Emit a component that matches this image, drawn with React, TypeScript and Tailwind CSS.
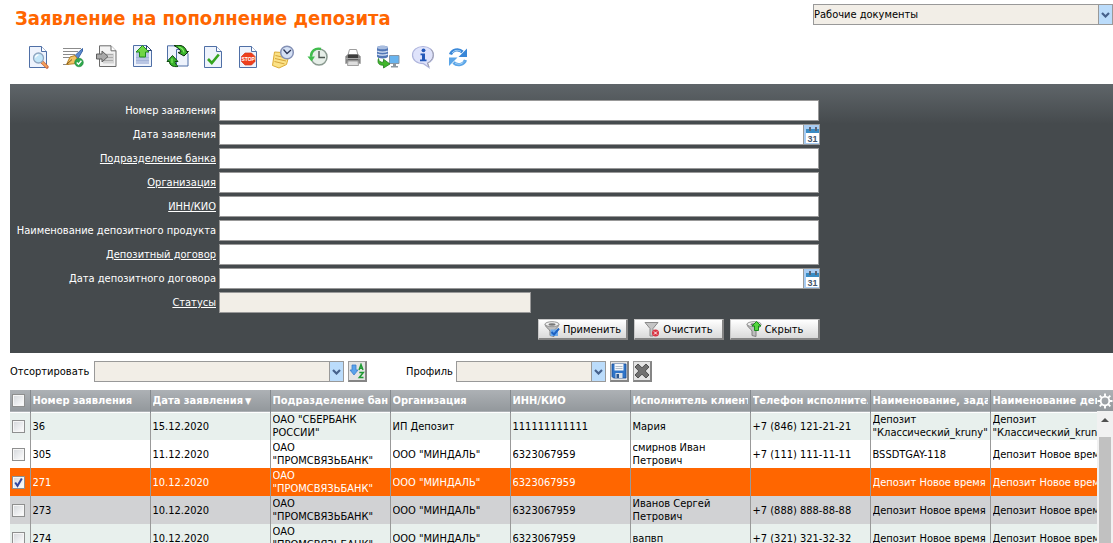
import React, { useId, useState } from "react";

type IconProps = { children: React.ReactNode };

function Icon24({ children }: IconProps) {
  return (
    <svg viewBox="0 0 24 24" className="size-6 shrink-0" fill="none" aria-hidden="true">
      {children}
    </svg>
  );
}

function Page({ stroke = "#4f6fa6", fill = "#eef3fc" }: { stroke?: string; fill?: string }) {
  return (
    <>
      <path d="M3.500 1.500h12l5 5v16h-17z" fill={fill} stroke={stroke} />
      <path d="M15.500 1.500v5h5" fill="#ffffff" stroke={stroke} />
    </>
  );
}

const tools: { label: string; icon: React.ReactNode }[] = [
  {
    label: "Просмотр",
    icon: (
      <Icon24>
        <Page />
        <path d="M16 17l5 5" stroke="#c9603a" strokeWidth="3.200" strokeLinecap="round" />
        <path d="M16 17l4.600 4.600" stroke="#f3a35c" strokeWidth="2" strokeLinecap="round" />
        <circle cx="12.500" cy="13" r="5" fill="#c3e6f8" stroke="#8fa6c0" strokeWidth="1.300" />
        <path d="M9.500 12.500a3.200 3.200 0 0 1 3-2.700" stroke="#ffffff" strokeWidth="1.300" />
      </Icon24>
    ),
  },
  {
    label: "Подписать",
    icon: (
      <Icon24>
        <path d="M2 3.500h18M2 6.500h15M2 9.500h12M2 12.500h7M2 19.500h6" stroke="#8b8b8b" />
        <path d="M21.500 3.500l-7.500 7 3 3 4.500-7.500z" fill="#5b8ad0" stroke="#3c66a8" />
        <path d="M14 10.500l-5 1.500-3.500 7.500 8-.8 3-4.700z" fill="#f3c262" stroke="#b58328" />
        <path d="M6 19l5-4.500" stroke="#7d5620" />
        <circle cx="18" cy="17.500" r="4.300" fill="#2fa84c" stroke="#1d8138" strokeWidth=".6" />
        <path d="M15.800 17.500l1.700 1.800 2.900-3.500" stroke="#ffffff" strokeWidth="1.400" />
      </Icon24>
    ),
  },
  {
    label: "Импорт",
    icon: (
      <Icon24>
        <path d="M3.500 .8h11.500l5 5v15.700h-16.500z" fill="#f3f3f3" stroke="#6b6b6b" />
        <path d="M15 .8v5h5" fill="#ffffff" stroke="#6b6b6b" />
        <path d="M7 8.500h11v10h-11z" fill="#d4d4d4" />
        <path d="M7 9.500h10M7 12.500h10M7 15.500h10" stroke="#ababab" />
        <path d="M.5 9h5.500v-3l6 5.500-6 5.500v-3h-5.500z" fill="#a9a9a9" stroke="#5f5f5f" />
      </Icon24>
    ),
  },
  {
    label: "Отправить",
    icon: (
      <Icon24>
        <path d="M2.500 .5h13l5 5v16h-18z" fill="#eef3fc" stroke="#4f6fa6" />
        <path d="M15.500 .5v5h5z" fill="#ffffff" stroke="#2b4475" />
        <path d="M5 6h13v13h-13z" fill="#b9c6e4" />
        <path d="M5 12.500h13M5 15.500h13" stroke="#a4b4d8" />
        <path d="M11.500 .5l6.500 6.500h-3.500v5h-6v-5h-3.500z" fill="#6fd644" stroke="#1f8a1c" />
      </Icon24>
    ),
  },
  {
    label: "Отправить и получить",
    icon: (
      <Icon24>
        <path d="M1.500 .8h8l4 3.700v12h-12z" fill="#eef3fc" stroke="#4f6fa6" />
        <path d="M10.500 4.500h7l4.500 4v12.500h-11.500z" fill="#eef3fc" stroke="#4f6fa6" />
        <path d="M8 .5c7-1.500 12 1.500 12.500 6h2l-4.500 4.500-6-3.500 3-.6c-.8-2.600-3-4-7-6.400z" fill="#38b42b" stroke="#0a2c0a" />
        <path d="M12.500 2c3 .7 5 2.500 5.500 5.500" stroke="#8cea6b" strokeWidth="1.200" />
        <path d="M6.500 10.500l5.500 6h-3c.2 2 1.200 3.500 3 5-5 .6-8.500-1-8.500-5h-2.500z" fill="#38b42b" stroke="#0d4b0d" />
        <path d="M6 13.500v4.500" stroke="#8cea6b" strokeWidth="1.200" />
      </Icon24>
    ),
  },
  {
    label: "Проверить",
    icon: (
      <Icon24>
        <Page />
        <path d="M7 14l3.800 4 7-8.500" stroke="#35a51f" strokeWidth="2.600" />
      </Icon24>
    ),
  },
  {
    label: "Отозвать",
    icon: (
      <Icon24>
        <Page />
        <path d="M9 8h6.500l3.500 3.500v5l-3.500 3.500h-6.500l-3.500-3.500v-5z" fill="#ee3f1d" stroke="#d0381c" strokeWidth=".7" />
        <text x="12.200" y="15.800" textAnchor="middle" className="font-[Liberation_Sans] text-[5px] font-bold" fill="#ffffff">STOP</text>
      </Icon24>
    ),
  },
  {
    label: "Отложить",
    icon: (
      <Icon24>
        <path d="M3.500 7l15 1-3 11.500-7.500 3.500-6.500-2.500z" fill="#fbe286" stroke="#dbab36" />
        <path d="M4.500 10.500l11 2.500M4 13.500l11 2.500M3.500 16.500l10 2.400" stroke="#d6a43a" />
        <circle cx="16" cy="7.500" r="6.300" fill="#d5e1f5" stroke="#8491b6" strokeWidth="1.500" />
        <path d="M12.500 4.500l3.500 4 4-3.500" stroke="#2c3656" strokeWidth="1.300" />
      </Icon24>
    ),
  },
  {
    label: "История",
    icon: (
      <Icon24>
        <circle cx="13" cy="12" r="8" fill="#e6eee8" stroke="#8a9a90" strokeWidth="1.500" />
        <path d="M13 6v6.500h6" stroke="#4d5751" strokeWidth="1.400" />
        <path d="M15 4c-6-1.500-10 2-10 7.500" stroke="#3fbd4c" strokeWidth="2.400" />
        <path d="M1.500 11.500h7.500l-3.500 5z" fill="#3fbd4c" />
      </Icon24>
    ),
  },
  {
    label: "Печать",
    icon: (
      <Icon24>
        <path d="M7 10l1.500-5.500h7l1.500 5.500z" fill="#ffffff" stroke="#9e9e9e" />
        <path d="M4.500 11.500l2-2h11l2 2v7h-15z" fill="#858585" stroke="#b0b0b0" />
        <path d="M7 9.500h10v5h-10z" fill="#3d3d3d" />
        <path d="M5 13.500h14" stroke="#a6a6a6" />
        <path d="M7 16h10l.5 4.500h-11z" fill="#dedede" stroke="#a0a0a0" />
      </Icon24>
    ),
  },
  {
    label: "Обмен данными",
    icon: (
      <Icon24>
        <path d="M1 2.500c0-2.500 11-2.500 11 0v9c0 2.500-11 2.500-11 0z" fill="#5277b6" />
        <ellipse cx="6.500" cy="2.500" rx="5.500" ry="1.800" fill="#a9bddf" />
        <path d="M1.300 6c2 1.500 8.400 1.500 10.400 0M1.300 9c2 1.500 8.400 1.500 10.400 0" stroke="#dce6f6" strokeWidth="1.200" />
        <path d="M13.500 10.500h9.500v8h-9.500z" fill="#68b4ef" stroke="#8996a3" />
        <path d="M17 19h3v2h2v1.500h-7v-1.500h2z" fill="#8c969e" />
        <path d="M2.500 13.500c.2 3 2.200 4 5 3.700v-3l6.500 4.800-6.500 4v-2.800c-4.500.3-6.500-2.200-5-6.700z" fill="#41b72b" stroke="#1e7b1c" strokeWidth=".8" />
      </Icon24>
    ),
  },
  {
    label: "Информация",
    icon: (
      <Icon24>
        <path d="M12 1.500c6 0 10.500 3.500 10.500 8.500 0 4-3 7-6 8l1.500 4.500-5.500-3.800c-7 0-11-4-11-8.700 0-5 4.500-8.500 10.500-8.500z" fill="#dfe3fb" stroke="#aeb4dc" strokeWidth="1.200" />
        <path d="M20 4.500c4 4 2.500 10.500-3.500 13.500l1.500 4" stroke="#9f9fac" />
        <circle cx="12.500" cy="5.300" r="1.900" fill="#2358b8" />
        <path d="M9.500 8.500h4.500v6h1.500v1.700h-6.500v-1.700h2v-4.300h-1.500z" fill="#2358b8" />
      </Icon24>
    ),
  },
  {
    label: "Обновить",
    icon: (
      <Icon24>
        <path d="M4.500 9.500c1.500-4.500 8-6.500 12-2.500" stroke="#3987d8" strokeWidth="3.200" />
        <path d="M21 3.500v8.500h-8.500z" fill="#3987d8" />
        <path d="M19.500 15c-1.500 4.500-8 6.500-12 2.500" stroke="#5aa5e8" strokeWidth="3.200" />
        <path d="M3 21v-8.500h8.500z" fill="#5aa5e8" />
        <path d="M6 8c2-2.800 6-3.500 9-1.500M18 16.500c-2 2.800-6 3.500-9 1.500" stroke="#a9d4f7" />
      </Icon24>
    ),
  },
];

function Dropdown({ id, label, options, className }: { id: string; label?: string; options: string[]; className: string }) {
  return (
    <span className={`relative block h-[21px] ${className}`}>
      <select id={id} aria-label={label} className="block size-full appearance-none border border-[#999999] bg-[#f2eee7] pr-4 text-black outline-none">
        {options.map((o) => (
          <option key={o}>{o}</option>
        ))}
      </select>
      <span className="pointer-events-none absolute inset-y-px right-px flex w-3.5 items-center justify-center border-l border-[#999999] bg-[#bbdcfb]">
        <svg viewBox="0 0 9 6" className="h-1.5 w-[9px]" fill="none" aria-hidden="true">
          <path d="M1 1l3.500 3.500L8 1" stroke="#46618c" strokeWidth="2.200" />
        </svg>
      </span>
    </span>
  );
}

function CalendarIcon() {
  return (
    <svg viewBox="0 0 15 19" className="h-[19px] w-[15px]" aria-hidden="true">
      <path d="M0 0h15v19h-15z" fill="#a9cdf3" />
      <path d="M2 4h13v4h-13z" fill="#3a8cc4" />
      <path d="M2 8h13v10h-13z" fill="#ffffff" />
      <path d="M5 2h2v4h-2zM11 2h2v4h-2z" fill="#5d6474" />
      <text x="8.500" y="16.500" textAnchor="middle" className="font-[Liberation_Sans] text-[9px] font-bold" fill="#44566d">31</text>
    </svg>
  );
}

type Field = { label: string; link?: boolean; kind?: "date" | "status" };

const fields: Field[] = [
  { label: "Номер заявления" },
  { label: "Дата заявления", kind: "date" },
  { label: "Подразделение банка", link: true },
  { label: "Организация", link: true },
  { label: "ИНН/КИО", link: true },
  { label: "Наименование депозитного продукта" },
  { label: "Депозитный договор", link: true },
  { label: "Дата депозитного договора", kind: "date" },
  { label: "Статусы", link: true, kind: "status" },
];

function FieldRow({ field }: { field: Field }) {
  const id = useId();
  return (
    <div className="flex h-[21px] items-center gap-[3px]">
      <label htmlFor={id} className="w-[206px] shrink-0 text-right">
        {field.link ? (
          <a href="#" className="underline underline-offset-1">
            {field.label}
          </a>
        ) : (
          field.label
        )}
      </label>
      {field.kind === "date" ? (
        <div className="flex h-full w-full max-w-[601px] border border-[#999999] bg-white">
          <input id={id} type="text" className="min-w-0 flex-1 px-1 text-black outline-none" />
          <button type="button" aria-label="Выбрать дату" className="w-4 border-l border-[#999999]">
            <CalendarIcon />
          </button>
        </div>
      ) : field.kind === "status" ? (
        <input id={id} type="text" readOnly className="h-full w-full max-w-[312px] border border-[#999999] bg-[#f2eee7] px-1 text-black outline-none" />
      ) : (
        <input id={id} type="text" className="h-full w-full max-w-[600px] border border-[#999999] bg-white px-1 text-black outline-none" />
      )}
    </div>
  );
}

function Funnel({ kind }: { kind: "apply" | "clear" | "hide" }) {
  return (
    <svg viewBox="0 0 16 16" className="size-4 shrink-0" fill="none" aria-hidden="true">
      {kind === "clear" ? (
        <path d="M1 1.500h13l-5 6v7.500h-3v-7.500z" fill="#c4c4c4" stroke="#8a8a8a" />
      ) : (
        <>
          <path d="M1 3.500c0 2 4 4.500 5 6.500v4.500l4 1v-5.500c1-2 5-4.500 5-6.500z" fill="#bdbdbd" stroke="#808080" />
          <ellipse cx="8" cy="3.200" rx="7" ry="2.500" fill="#f0f0f0" stroke="#959595" />
          <ellipse cx="8" cy="3.500" rx="3.500" ry="1.200" fill="#777777" />
        </>
      )}
      {kind === "apply" && (
        <>
          <path d="M6.500 8.500h7.500v6.500h-7.500z" fill="#6aa9ec" />
          <path d="M7.500 11l2.500 2.500 5-6" stroke="#1d62c2" strokeWidth="2" />
        </>
      )}
      {kind === "clear" && (
        <>
          <circle cx="11.500" cy="12" r="3.500" fill="#d93342" />
          <path d="M10 10.500l3 3M13 10.500l-3 3" stroke="#ffffff" />
        </>
      )}
      {kind === "hide" && <path d="M10.500 .5l4.500 4.500h-2.500v4.500h-4v-4.500h-2.500z" fill="#55d63f" stroke="#178a1b" />}
    </svg>
  );
}

function FilterButton({ kind, children }: { kind: "apply" | "clear" | "hide"; children: React.ReactNode }) {
  return (
    <button type="button" className="flex h-[21px] w-[90px] items-center justify-center gap-[3px] border-r-2 border-b-2 border-t border-l border-t-[#c8c8c8] border-l-[#c8c8c8] border-r-[#858585] border-b-[#858585] bg-linear-to-b from-white to-[#dadada] text-black">
      <Funnel kind={kind} />
      {children}
    </button>
  );
}

const squareButton =
  "flex h-[21px] w-[19px] items-center justify-center border-r-2 border-b-2 border-t border-l border-t-[#9b9b9b] border-l-[#9b9b9b] border-r-[#858585] border-b-[#858585] bg-[#e4e4e4]";

function Tick({ label, checked, onChange }: { label: string; checked: boolean; onChange: () => void }) {
  return (
    <span className="grid size-[13px] place-items-center">
      <input
        type="checkbox"
        aria-label={label}
        checked={checked}
        onChange={onChange}
        className="col-start-1 row-start-1 size-[13px] appearance-none border border-[#8e8f8f] bg-linear-to-br from-[#d4d7db] to-white outline-1 -outline-offset-2 outline-[#f6f6f6]"
      />
      {checked && (
        <svg viewBox="0 0 13 13" className="pointer-events-none col-start-1 row-start-1 size-[13px]" fill="none" aria-hidden="true">
          <path d="M3.200 6.500l2.300 3.300 4.300-7.300" stroke="#31479e" strokeWidth="2" />
        </svg>
      )}
    </span>
  );
}

const headers = [
  "Номер заявления",
  "Дата заявления",
  "Подразделение банка",
  "Организация",
  "ИНН/КИО",
  "Исполнитель клиента",
  "Телефон исполнителя",
  "Наименование, заданное",
  "Наименование депозита",
];

const sber = 'ОАО "СБЕРБАНК РОССИИ"';
const prom = 'ОАО "ПРОМСВЯЗЬБАНК"';
const almond = 'ООО "МИНДАЛЬ"';
const classic = 'Депозит "Классический_kruny"';
const fresh = "Депозит Новое время";

const rows: string[][] = [
  ["36", "15.12.2020", sber, "ИП Депозит", "111111111111", "Мария", "+7 (846) 121-21-21", classic, classic],
  ["305", "11.12.2020", prom, almond, "6323067959", "смирнов Иван Петрович", "+7 (111) 111-11-11", "BSSDTGAY-118", fresh],
  ["271", "10.12.2020", prom, almond, "6323067959", "", "", fresh, fresh],
  ["273", "10.12.2020", prom, almond, "6323067959", "Иванов Сергей Петрович", "+7 (888) 888-88-88", fresh, fresh],
  ["274", "10.12.2020", prom, almond, "6323067959", "вапвп", "+7 (321) 321-32-32", fresh, fresh],
];

const rowColors = ["bg-[#e8f0ed]", "bg-white", "bg-white", "bg-[#d1d2d4]", "bg-[#e8f0ed]"];

function DocumentsTable() {
  const [selected, setSelected] = useState<string[]>(["271"]);
  const toggle = (n: string) => setSelected((s) => (s.includes(n) ? s.filter((x) => x !== n) : [...s, n]));
  const all = selected.length === rows.length;

  return (
    <div className="flex min-h-0 flex-1 overflow-hidden">
      <div className="min-w-0 flex-1 overflow-hidden">
        <table className="w-full min-w-[1100px] table-fixed border-collapse text-left">
          <colgroup>
            <col className="w-5" />
            {headers.map((h, i) => (
              <col key={h} className={i < 8 ? "w-[120px]" : ""} />
            ))}
          </colgroup>
          <thead>
            <tr className="h-[22px] border-b border-white bg-linear-to-b from-[#adb1b5] to-[#93989c] text-white">
              <th className="p-0 pl-0.5">
                <Tick label="Выбрать все" checked={all} onChange={() => setSelected(all ? [] : rows.map((r) => r[0]))} />
              </th>
              {headers.map((h, i) => (
                <th key={h} className="border-l border-[#84898d] p-0 px-0.5">
                  <div className="overflow-hidden whitespace-nowrap font-bold">
                    {h}
                    {i === 1 && <span className="pl-0.5 text-[9px]">▼</span>}
                  </div>
                </th>
              ))}
            </tr>
          </thead>
          <tbody>
            {rows.map((r, i) => {
              const on = selected.includes(r[0]);
              return (
                <tr key={r[0]} className={`h-7 ${on ? "bg-[#ff6600] text-white" : rowColors[i]}`}>
                  <td className="p-0 pl-0.5">
                    <Tick label={`Выбрать заявление ${r[0]}`} checked={on} onChange={() => toggle(r[0])} />
                  </td>
                  {r.map((c, j) => (
                    <td key={j} className="border-l border-[#999999] p-0 pl-0.5">
                      <div className="overflow-hidden">{c}</div>
                    </td>
                  ))}
                </tr>
              );
            })}
          </tbody>
        </table>
      </div>
      <div className="flex w-4 shrink-0 flex-col bg-[#f1f1f1]">
        <button type="button" aria-label="Настройка столбцов" className="flex h-[21px] items-center justify-center bg-linear-to-b from-[#adb1b5] to-[#93989c]">
          <svg viewBox="0 0 16 16" className="size-4" fill="none" stroke="#ffffff" aria-hidden="true">
            <circle cx="8" cy="8" r="4.300" strokeWidth="1.800" />
            <path d="M8 .5v3M8 12.500v3M.5 8h3M12.500 8h3M2.700 2.700l2.100 2.100M11.200 11.200l2.100 2.100M2.700 13.300l2.100-2.100M11.200 4.800l2.100-2.100" strokeWidth="1.900" />
          </svg>
        </button>
        <span className="flex h-[26px] items-start justify-center pt-[7px]">
          <svg viewBox="0 0 8 4" className="h-1 w-2" aria-hidden="true">
            <path d="M0 4l4-4 4 4z" fill="#505050" />
          </svg>
        </span>
        <span className="mx-0.5 flex-1 bg-[#c1c1c1]" />
      </div>
    </div>
  );
}

export default function App() {
  return (
    <main className="flex h-screen flex-col overflow-hidden bg-white pl-2.5 font-['DejaVu_Sans_Condensed','DejaVu_Sans',sans-serif] text-[11px] leading-[13px] text-black">
      <header className="flex h-[41px] items-start justify-between pt-1">
        <h1 className="pt-0.5 pl-[5px] text-[20px] leading-6 font-bold text-[#ff6600]">
          Заявление на пополнение депозита
        </h1>
        <Dropdown id="folder" label="Папка" options={["Рабочие документы"]} className="w-[300px]" />
      </header>

      <nav className="flex h-[43px] shrink-0 items-start gap-[11px] pt-1 pl-4" aria-label="Действия">
        {tools.map((t) => (
          <button key={t.label} type="button" aria-label={t.label}>
            {t.icon}
          </button>
        ))}
      </nav>

      <form className="flex shrink-0 flex-col gap-[3px] bg-[#454a4d] bg-[linear-gradient(to_bottom,#5f6569_0px,#454a4d_40px)] pt-4 pb-[13px] text-white">
        {fields.map((f) => (
          <FieldRow key={f.label} field={f} />
        ))}
        <div className="flex w-full max-w-[810px] justify-end gap-1.5 pt-[3px]">
          <FilterButton kind="apply">Применить</FilterButton>
          <FilterButton kind="clear">Очистить</FilterButton>
          <FilterButton kind="hide">Скрыть</FilterButton>
        </div>
      </form>

      <div className="flex shrink-0 items-center gap-[39px] py-2">
        <div className="flex items-center gap-1">
          <label htmlFor="sort" className="w-20">
            Отсортировать
          </label>
          <Dropdown id="sort" options={[""]} className="w-[250px]" />
          <button type="button" aria-label="Порядок сортировки" className={squareButton}>
            <svg viewBox="0 0 16 16" className="size-4" fill="none" aria-hidden="true">
              <path d="M3 2h4v5h2l-4 5-4-5h2z" fill="#5aa3ec" stroke="#3b7cca" strokeWidth=".8" />
              <path d="M10 7l2-5.500 2 5.500M10.800 5.200h2.600M10.300 9.500h4l-4 5h4.200" stroke="#1f9a34" strokeWidth="1.500" />
            </svg>
          </button>
        </div>
        <div className="flex items-center gap-1">
          <label htmlFor="profile" className="w-[46px]">
            Профиль
          </label>
          <Dropdown id="profile" options={[""]} className="w-[150px]" />
          <button type="button" aria-label="Сохранить профиль" className={squareButton}>
            <svg viewBox="0 0 16 16" className="size-4" aria-hidden="true">
              <path d="M1 1h14v14h-12.500l-1.500-1.500z" fill="#2f74c8" stroke="#1b4c93" strokeWidth=".8" />
              <path d="M3.500 1h9v6.500h-9z" fill="#f6f8fb" />
              <path d="M4.500 3.500h7M4.500 5.500h7" stroke="#b2bdc9" />
              <path d="M4.500 10h7v5h-7z" fill="#dbe2ea" />
              <path d="M5.500 11h2.500v4h-2.500z" fill="#2c578f" />
            </svg>
          </button>
          <button type="button" aria-label="Удалить профиль" className={squareButton}>
            <svg viewBox="0 0 16 16" className="size-4" aria-hidden="true">
              <path d="M4 1l4 3.800 4-3.800 3 3-3.800 4 3.800 4-3 3-4-3.800-4 3.800-3-3 3.800-4-3.800-4z" fill="#707070" stroke="#505050" strokeLinejoin="round" />
            </svg>
          </button>
        </div>
      </div>

      <DocumentsTable />
    </main>
  );
}
